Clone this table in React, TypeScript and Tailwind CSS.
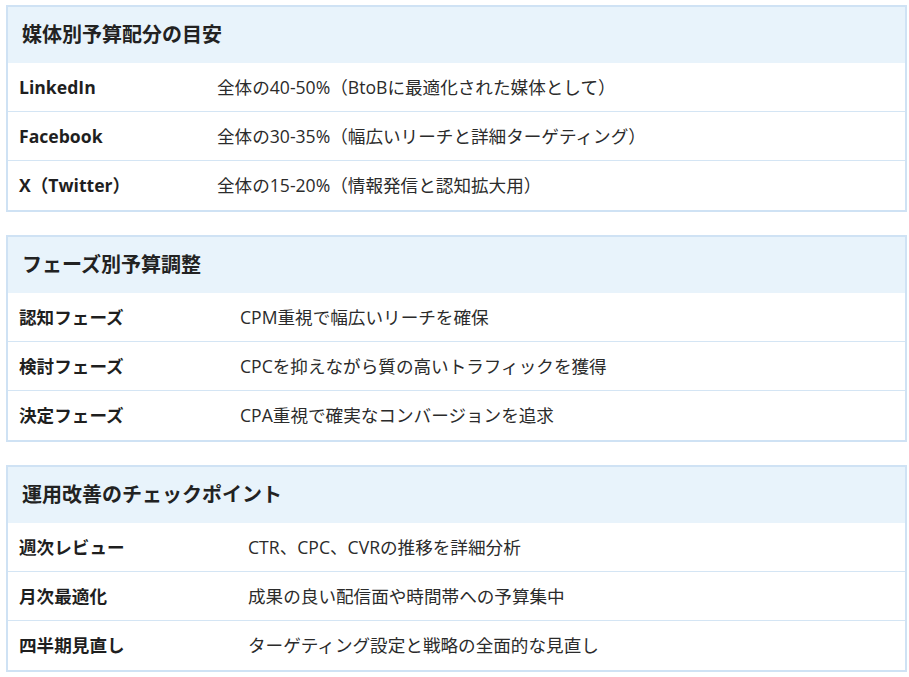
const sections = [
  {
    title: "媒体別予算配分の目安",
    labelWidth: "w-[198px]",
    rows: [
      ["LinkedIn", "全体の40-50%（BtoBに最適化された媒体として）"],
      ["Facebook", "全体の30-35%（幅広いリーチと詳細ターゲティング）"],
      ["X（Twitter）", "全体の15-20%（情報発信と認知拡大用）"],
    ],
  },
  {
    title: "フェーズ別予算調整",
    labelWidth: "w-[221px]",
    rows: [
      ["認知フェーズ", "CPM重視で幅広いリーチを確保"],
      ["検討フェーズ", "CPCを抑えながら質の高いトラフィックを獲得"],
      ["決定フェーズ", "CPA重視で確実なコンバージョンを追求"],
    ],
  },
  {
    title: "運用改善のチェックポイント",
    labelWidth: "w-[229px]",
    rows: [
      ["週次レビュー", "CTR、CPC、CVRの推移を詳細分析"],
      ["月次最適化", "成果の良い配信面や時間帯への予算集中"],
      ["四半期見直し", "ターゲティング設定と戦略の全面的な見直し"],
    ],
  },
];

export default function App() {
  return (
    <div className="min-h-screen bg-white pt-[5px] pl-[6px] font-['Open_Sans','Noto_Sans_CJK_JP',sans-serif]">
      <div className="flex w-[901px] flex-col gap-[23px]">
        {sections.map((s) => (
          <div key={s.title} className="border-2 border-[#cfe2f4] bg-white">
            <div className="flex h-[56px] items-center bg-[#e8f3fb] pl-[14px] text-[20px] font-bold text-[#222]">
              {s.title}
            </div>
            <div className="divide-y divide-[#d4e5f4]">
              {s.rows.map(([label, value]) => (
                <div key={label} className="flex h-[49px] items-center text-[17.6px]">
                  <div className={`${s.labelWidth} shrink-0 pl-[11px] font-bold text-[#1f1f1f]`}>
                    {label}
                  </div>
                  <div className="pl-[11px] text-[#2b2b2b]">{value}</div>
                </div>
              ))}
            </div>
          </div>
        ))}
      </div>
    </div>
  );
}
